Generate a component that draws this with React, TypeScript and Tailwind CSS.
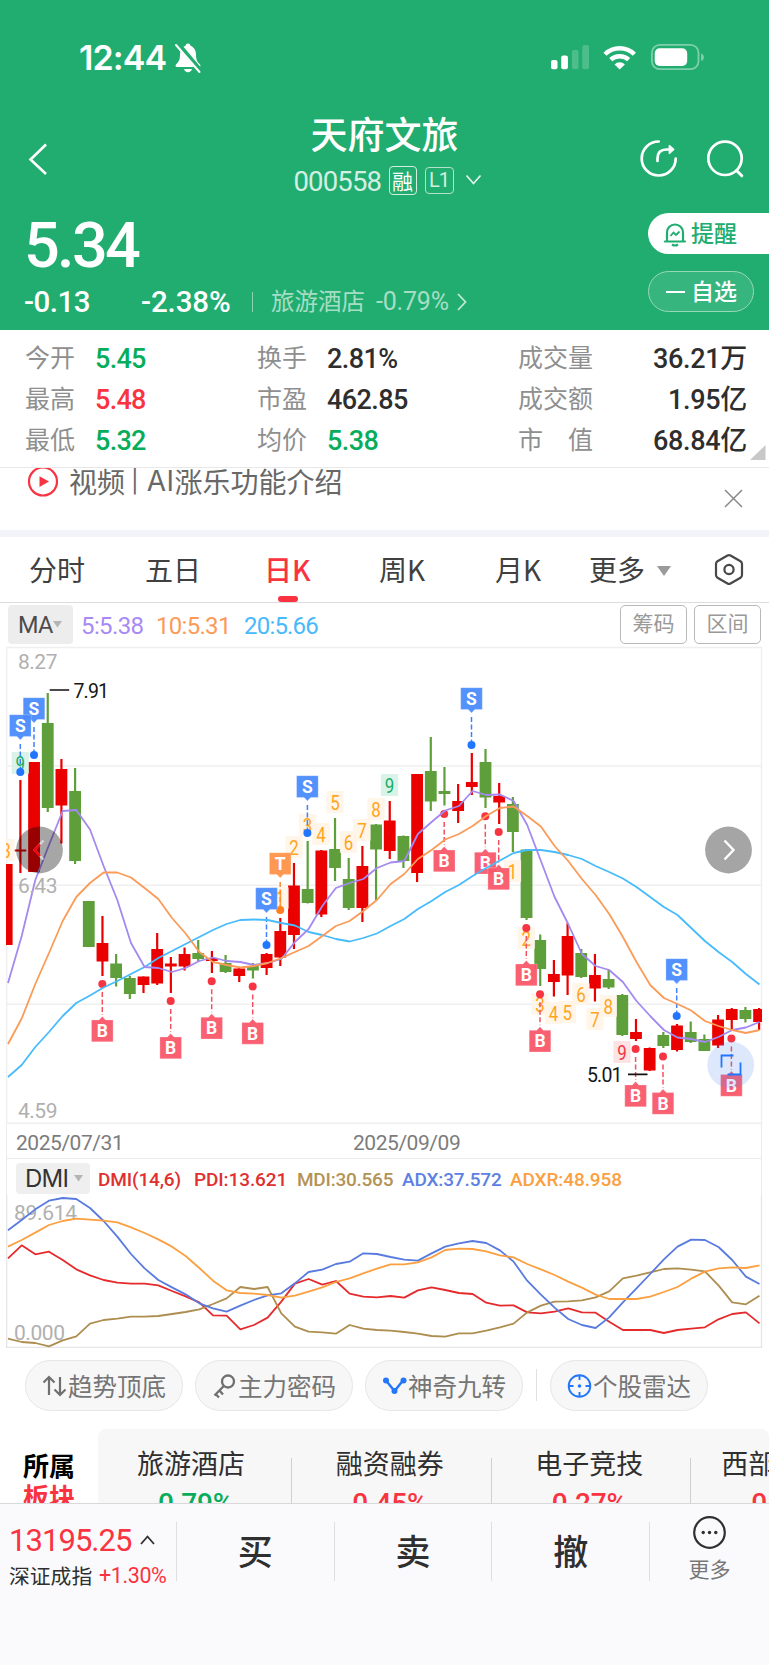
import React from "react";

type Candle = [number, number, number, number, "r" | "g"];

// high, body top, body bottom, low, direction
const candles: Candle[] = [
  [864, 864, 945, 945, "r"], [780, 849.5, 851.5, 873, "r"], [762, 762, 872, 872, "r"],
  [693, 723, 808, 812, "g"], [759, 769, 805.5, 843.5, "r"], [768, 791, 861, 864, "g"],
  [901, 901, 947, 947, "g"], [916, 943, 961.5, 976, "r"], [954, 963.5, 978, 986.5, "g"],
  [976, 978, 994, 999, "g"], [976.5, 976.5, 985, 993, "r"], [933, 949, 983.5, 985, "r"],
  [957, 963.5, 966.5, 993, "r"], [947.5, 954, 966.5, 970.5, "r"], [940, 953, 959, 962, "g"],
  [951, 958, 961, 973, "r"], [955, 963, 972, 973, "g"], [968, 968.5, 976, 982, "r"],
  [963, 966, 970.5, 978.5, "g"], [953, 954, 968, 975, "r"], [918, 931, 957.5, 966, "r"],
  [863, 885.5, 935, 949, "r"], [841, 889, 903, 903.5, "g"], [850, 850.5, 914.5, 917, "r"],
  [818, 849, 868, 881, "g"], [858, 879, 908, 910, "g"], [846, 866, 908, 922, "r"],
  [824, 824.5, 849.5, 900, "g"], [801, 820.5, 851, 859, "r"], [835.5, 836, 861, 868, "g"],
  [774, 774, 873, 882, "r"], [737, 771, 801.5, 811, "g"], [767, 791, 794, 805.5, "g"],
  [784, 801, 811, 823, "r"], [753, 782, 787, 795, "r"], [749, 762, 797.5, 808, "g"],
  [783, 796, 802.5, 824, "r"], [797, 804, 832, 852, "g"], [849, 849.5, 918, 920, "g"],
  [934.5, 940, 969, 986, "g"], [960, 974, 982, 996.5, "r"], [923, 936, 975.5, 995, "r"],
  [949, 953, 977, 978, "g"], [954, 975, 988.5, 1001.5, "r"], [970, 979, 987.5, 989, "g"],
  [994, 995, 1035, 1036, "g"], [1019, 1032, 1039, 1041, "r"], [1047.5, 1048, 1070.5, 1071, "r"],
  [1032, 1035, 1046, 1048, "g"], [1024, 1025.5, 1050, 1051.5, "r"], [1021.5, 1032, 1042, 1043, "g"],
  [1034.5, 1039, 1051, 1051, "g"], [1015, 1019.5, 1045.5, 1048, "r"], [1008, 1009, 1020, 1030, "r"],
  [1007, 1010, 1019, 1022.5, "g"], [1008, 1009, 1022, 1030, "r"],
];

const ma5 = [983, 936, 880, 845, 811, 810, 829.5, 866, 900, 943, 967, 968, 972, 968, 961, 957.5, 961, 962, 965, 963, 959, 942, 929, 906, 888, 883, 879, 868, 862.5, 861, 834, 822, 810.5, 806, 791, 795, 794.5, 801, 825, 861, 897, 924, 954, 966, 970, 982, 1001, 1016, 1030, 1037.5, 1039, 1042, 1037, 1030, 1027.5, 1022];
const ma10 = [1044, 1018.5, 984, 953, 921, 897, 883, 872.5, 872.5, 877.5, 888, 899, 918, 933.5, 952, 962, 965, 967.5, 966, 963, 958, 952, 946, 936, 926, 921, 911, 900, 884, 874, 859, 850, 839.5, 834, 826, 816, 808, 806.5, 816, 826.5, 846, 861, 879, 895, 914, 937, 962, 985, 998, 1004, 1010.5, 1021, 1026, 1030, 1033, 1030];
const ma20 = [1077, 1065, 1047, 1032, 1016, 1003, 995.5, 987.5, 981, 974, 967, 958, 951, 944, 937, 930, 924, 920, 919.5, 920, 923, 925.5, 932, 935, 939, 941.5, 938, 933.5, 926, 919, 909, 901, 892, 885, 876, 868, 860.5, 853, 850, 850, 852, 855, 859, 866, 872, 878.5, 887, 897, 907, 915, 928, 941, 952, 962, 974, 984.5];

const adx = [241, 210, 178, 152, 144, 147, 174, 213, 260, 312, 355, 390, 412, 433, 460, 475, 485, 467, 450, 436, 430, 400, 366, 359, 342, 335, 310, 312, 321, 329, 332, 310, 290, 280, 273, 279, 301, 335, 392, 434, 473, 507, 525, 534, 502, 457, 415, 372, 328, 290, 269, 270, 291, 330, 380, 402];
const adxr = [290, 270, 248, 225, 213, 206, 209, 212, 217, 232, 249, 268, 290, 318, 354, 392, 421, 429, 431, 435, 443, 437, 425, 412, 396, 385, 370, 356, 343, 343, 337, 322, 300, 296, 297, 304, 316, 322, 342, 358, 375, 395, 413, 434, 447, 447, 447, 440, 426, 411, 386, 365, 355, 352, 354, 346];
const pdi = [325, 286, 313, 305, 330, 358, 376, 390, 398, 401, 401, 406, 423, 439, 457, 496, 497, 538, 525, 503, 455, 401, 387, 404, 393, 431, 440, 442, 438, 443, 421, 412, 420, 429, 432, 458, 467, 466, 487, 490, 485, 475, 487, 488, 515, 540, 540, 540, 549, 540, 536, 532, 508, 492, 487, 520];
const mdi = [566, 576, 579, 589, 571, 559, 521, 510, 506, 500, 500, 498, 492, 486, 478, 462, 445, 411, 417, 411, 490, 530, 545, 547, 551, 525, 536, 540, 542, 546, 551, 558, 560, 550, 550, 542, 532, 521, 487, 467, 455, 454, 451, 442, 424, 385, 377, 367, 357, 355, 359, 364, 406, 457, 463, 437];

const line = (ys: number[]) => ys.map((y, i) => `${(8 + 13.664 * i).toFixed(1)},${y}`).join(" ");
const dmiLine = (vs: number[]) => line(vs.map((v) => 1150 + v / 3));

const NUM = "Roboto, sans-serif";

// label, centre x, centre y, tone
const counts: [string, number, number, "o" | "g" | "p"][] = [
  ["3", 6, 850, "o"], ["9", 20.3, 763, "g"], ["1", 280, 898, "o"], ["2", 294, 847, "o"], ["3", 307.5, 825, "o"],
  ["4", 321, 834, "o"], ["5", 335, 802, "o"], ["6", 348.5, 842, "o"], ["7", 362, 830, "o"],
  ["8", 376, 809, "o"], ["9", 389.5, 785, "g"], ["1", 512.5, 871, "o"], ["2", 526.3, 938, "o"],
  ["3", 540, 1004, "o"], ["4", 553.5, 1013, "o"], ["5", 567.3, 1012, "o"], ["6", 581, 994, "o"],
  ["7", 595, 1019, "o"], ["8", 608.3, 1006, "o"], ["9", 622, 1052, "p"],
];
const countTone = {
  o: ["#fff4e6", "#ffa41c"],
  g: ["#d6f2e5", "#14ae67"],
  p: ["#fde0e0", "#f5333f"],
};

const sells: [string, number, number][] = [
  ["S", 34, 755], ["S", 20.3, 772], ["S", 307.4, 833], ["T", 280.2, 910], ["S", 266.5, 945], ["S", 471.5, 745], ["S", 676.7, 1016],
];
const buys: [number, number][] = [
  [102.3, 984], [170.7, 1001], [211.7, 981.3], [252.7, 986.5], [444.2, 814], [485.3, 816.3], [498.7, 832],
  [526.3, 928], [540, 994.3], [635.6, 1049], [663, 1056.6], [731.4, 1038.6],
];

function CandleChart() {
  return (
    <svg width="769" height="478" viewBox="0 646 769 478" className="block shrink-0">
      <defs>
        <clipPath id="plot"><rect x="6" y="646" width="756" height="478" /></clipPath>
      </defs>
      {[647.5, 766, 885.3, 1004.3, 1123.3].map((y) => (
        <line key={y} x1="6" x2="762" y1={y} y2={y} stroke="#efefef" strokeWidth="1.4" />
      ))}
      <path d="M6.7 647V1124M761.5 647V1124" stroke="#efefef" strokeWidth="1.4" />
      <g clipPath="url(#plot)">
        {candles.map(([h, t, b, l, c], i) => {
          const x = 6.7 + 13.68 * i;
          const fill = c === "r" ? "#eb0000" : "#5f9f3b";
          return (
            <g key={i} fill={fill}>
              <rect x={x - 1.1} y={h} width="2.2" height={l - h} />
              <rect x={x - 5.9} y={t} width="11.8" height={b - t} />
            </g>
          );
        })}
        {counts.map(([n, x, y, tone], i) => (
          <g key={i}>
            <rect x={x - 8.6} y={y - 11} width="17.2" height="22" rx="1" fill={countTone[tone][0]} opacity="0.9" />
            <text x={x} y={y + 7.5} textAnchor="middle" fontFamily={NUM} fontSize="20.5" textLength="9.5" lengthAdjust="spacingAndGlyphs" fill={countTone[tone][1]}>{n}</text>
          </g>
        ))}
        {buys.map(([x, y], i) => (
          <g key={i}>
            <line x1={x} x2={x} y1={y + 8} y2={y + 31} stroke="#f4505d" strokeWidth="1.5" strokeDasharray="5 2.5" />
            <circle cx={x} cy={y} r="4" fill="#f73442" />
            <path d={`M${x - 10.8} ${y + 36}h7.5l3.3-3.5 3.3 3.5h7.5v21.7h-21.6z`} fill="#f9596a" fillOpacity="0.95" stroke="#fff" strokeOpacity="0.4" strokeWidth="0.6" />
            <text x={x} y={y + 53} textAnchor="middle" fontFamily={NUM} fontSize="17.5" fontWeight="700" fill="#fff">B</text>
          </g>
        ))}
        {sells.map(([t, x, y], i) => {
          const o = t === "T";
          return (
            <g key={i}>
              <line x1={x} x2={x} y1={y - 28} y2={y - 4} stroke={o ? "#ff8a2b" : "#3d82fa"} strokeWidth="1.5" strokeDasharray="5 2.5" />
              <circle cx={x} cy={y} r="4" fill={o ? "#ff7e1f" : "#2176ff"} />
              <path d={`M${x - 10.8} ${y - 57.3}h21.6v21.7h-7.5l-3.3 3.5-3.3-3.5h-7.5z`} fill={o ? "#ff9248" : "#4a8bfd"} fillOpacity="0.95" stroke="#fff" strokeOpacity="0.4" strokeWidth="0.6" />
              <text x={x} y={y - 40} textAnchor="middle" fontFamily={NUM} fontSize="17.5" fontWeight="700" fill="#fff">{t}</text>
            </g>
          );
        })}
      </g>
      <g fill="none" strokeWidth="1.8" strokeLinejoin="round">
        <polyline points={line(ma20)} stroke="#48bbfc" />
        <polyline points={line(ma5)} stroke="#a389f0" />
        <polyline points={line(ma10)} stroke="#fb9b58" />
      </g>
      <g fontFamily={NUM} fontSize="21" fill="#b0b0b0">
        <text x="18" y="669" textLength="39.5">8.27</text>
        <text x="18" y="893" textLength="39.5">6.43</text>
        <text x="18" y="1118" textLength="39.5">4.59</text>
      </g>
      <g fontFamily={NUM} fontSize="19.5" fill="#151515">
        <text x="73.5" y="697.5" textLength="35.5">7.91</text>
        <text x="587" y="1082" textLength="35.5">5.01</text>
      </g>
      <path d="M49.7 690h19.5M628 1074.4h19.5" stroke="#111" strokeWidth="1.7" />
      <circle cx="39.5" cy="850" r="23.4" fill="#000" fillOpacity="0.35" />
      <path d="M43.5 840.5L34.5 850l9 9.5" fill="none" stroke="#fff" strokeOpacity="0.55" strokeWidth="2.4" />
      <path d="M40 844.5L34.5 850l5.5 6" fill="none" stroke="#f00010" strokeWidth="2.4" />
      <circle cx="728.5" cy="850" r="23.4" fill="#a5a5a5" />
      <path d="M724.5 840.5l9 9.5-9 9.5" fill="none" stroke="#fff" strokeWidth="2.4" />
      <circle cx="730.7" cy="1065" r="23.4" fill="#4a86f0" fillOpacity="0.19" />
      <path d="M721.5 1067.5v-12h12M740.5 1062.5v12h-13" fill="none" stroke="#2176ff" strokeWidth="1.8" />
    </svg>
  );
}

function DmiChart() {
  return (
    <svg width="769" height="153" viewBox="0 1195 769 153" className="block shrink-0">
      <path d="M6.7 1195V1347.3H761.5V1195" fill="none" stroke="#e6e6e6" strokeWidth="1.3" />
      <g fontFamily={NUM} fontSize="21" fill="#b0b0b0">
        <text x="14" y="1219.5" textLength="63">89.614</text>
        <text x="14" y="1340" textLength="51">0.000</text>
      </g>
      <g fill="none" strokeWidth="1.8" strokeLinejoin="round">
        <polyline points={dmiLine(pdi)} stroke="#e52a2c" />
        <polyline points={dmiLine(mdi)} stroke="#ad8d50" />
        <polyline points={dmiLine(adx)} stroke="#597bdf" />
        <polyline points={dmiLine(adxr)} stroke="#fba041" />
      </g>
    </svg>
  );
}

function StatusBar() {
  return (
    <div className="flex h-[115px] pt-[37px] pl-[79px]">
      <div className="h-10 w-[93px] pt-px text-[34px] leading-10 font-semibold tracking-[-0.900px] whitespace-nowrap [font-family:Inter,sans-serif]">12:44</div>
      <svg className="mt-1 ml-[2px]" width="28" height="34" viewBox="0 0 28 34">
        <path d="M14 2.500c-1.500 0-2.200 1-2.300 1.900C8 6 6 9 6 13.500c0 6-1.600 7.500-4 10-1 1.200-.4 2.500 1 2.500h22c1.400 0 2-1.300 1-2.500-2.400-2.500-4-4-4-10 0-4.500-2-7.500-5.700-9.100-.1-.9-.8-1.900-2.300-1.900zM10 28h8c-.4 2-2 3.200-4 3.200S10.400 30 10 28z" fill="#fff" />
        <path d="M3.500 2.500L27 30.500" stroke="#21ad70" strokeWidth="5" />
        <path d="M2 4L25.500 31" stroke="#fff" strokeWidth="2" strokeLinecap="round" />
      </svg>
      <svg className="mt-1 ml-[349px]" width="158" height="34" viewBox="551 41 158 34">
        <g fill="#fff">
          <rect x="551" y="60" width="6.500" height="9.300" rx="2" />
          <rect x="561.200" y="55.500" width="6.700" height="13.800" rx="2" />
          <rect x="572" y="50" width="6.500" height="19.300" rx="2" opacity="0.2" />
          <rect x="582.300" y="45" width="6.700" height="24.300" rx="2" opacity="0.2" />
        </g>
        <g fill="none" stroke="#fff" strokeWidth="4.400">
          <path d="M605 54.200a21 21 0 0 1 29.400 0" />
          <path d="M610.700 59.700a13.300 13.300 0 0 1 18 0" />
        </g>
        <path d="M619.700 69.500l-5.200-5.100a7.500 7.500 0 0 1 10.400 0z" fill="#fff" />
        <rect x="651.900" y="44.800" width="46.600" height="24.400" rx="8" fill="none" stroke="#fff" strokeOpacity="0.42" strokeWidth="1.800" />
        <rect x="654.700" y="48.200" width="32.500" height="17.800" rx="5" fill="#fff" />
        <path d="M701.200 53.500q2.700 1 2.700 3.700t-2.700 3.700z" fill="#fff" opacity="0.45" />
      </svg>
    </div>
  );
}

function Header() {
  return (
    <header className="flex h-[330px] shrink-0 flex-col bg-[#21ad70] text-white">
      <StatusBar />
      <div className="flex h-[85px] justify-between">
        <svg className="mt-[27px] ml-[27px]" width="245" height="35" viewBox="0 0 245 35">
          <path d="M19 2.500L3.500 17.500 19 32" fill="none" stroke="#fff" strokeWidth="2.600" />
        </svg>
        <div className="-mt-[3px] flex w-[210px] flex-col items-center">
          <div className="h-[42px] text-[37px] leading-[42px] font-medium whitespace-nowrap">天府文旅</div>
          <div className="mt-[10px] flex h-[32px] w-[188px] translate-x-[3px] items-center">
            <span className="w-[95px] pt-[3px] text-[27.500px] leading-8 tracking-[-0.850px] text-[#d3efe2] [font-family:Roboto]">000558</span>
            <span className="flex h-[29px] w-[28px] items-center justify-center rounded-[4px] border border-[#d3efe2] text-[21px] leading-none">融</span>
            <span className="ml-2 flex h-[27px] w-[29px] items-center justify-center rounded-[4px] border border-[#b5e2cf] text-[20px] leading-none tracking-[-1px] text-[#d3efe2] [font-family:Roboto]">L1</span>
            <svg className="ml-[11px] shrink-0" width="17" height="12" viewBox="0 0 17 12"><path d="M1.500 1.500l7 8 7-8" fill="none" stroke="#dff3ea" strokeWidth="1.800" /></svg>
          </div>
        </div>
        <svg className="mt-[23px] mr-[22px]" width="250" height="42" viewBox="497 138 250 42">
          <g fill="none" stroke="#fff" strokeWidth="2.700" strokeLinecap="round" strokeLinejoin="round">
            <path d="M658.700 141.500a17 17 0 1 0 17 17" />
            <path d="M657.500 161v-2.500q0-9 9-9h6" />
            <path d="M669.500 145.800l4 3.600-4 3.800z" fill="#fff" strokeWidth="1.800" />
            <circle cx="725" cy="158.300" r="16.700" />
            <path d="M736.500 170.500l5.300 5.300" strokeWidth="3" />
          </g>
        </svg>
      </div>
      <div className="flex h-[130px] justify-between">
        <div className="flex flex-col pl-[24px]">
          <div className="mt-[15px] h-[62px] text-[63px] leading-[62px] font-medium tracking-[-2.700px] [font-family:Roboto]">5.34</div>
          <div className="mt-[9px] flex h-8 items-center whitespace-nowrap [font-family:Roboto,'Noto_Sans_CJK_SC',sans-serif]">
            <span className="w-[117px] text-[29.500px] leading-8 font-medium tracking-[-0.500px]">-0.13</span>
            <span className="w-[111px] text-[29.500px] leading-8 font-medium tracking-[-0.100px]">-2.38%</span>
            <span className="h-5 w-px bg-[#8ad2b1]" />
            <span className="ml-[18px] w-[105px] text-[23.500px] leading-8 text-[#a6dec5]">旅游酒店</span>
            <span className="w-[80px] text-[25px] leading-8 tracking-[-0.200px] text-[#a6dec5]">-0.79%</span>
            <svg width="12" height="20" viewBox="0 0 12 20"><path d="M2 2l7.500 8L2 18" fill="none" stroke="#c0e8d6" strokeWidth="1.800" /></svg>
          </div>
        </div>
        <div className="flex w-[121px] flex-col pt-[13px]">
          <div className="flex h-[41px] items-center rounded-l-full bg-white pl-[15px] text-[#21ad70]">
            <svg width="24" height="26" viewBox="0 0 24 26" fill="none" stroke="currentColor" strokeWidth="2.200">
              <path d="M2 20.500h20M4 20V11.500a8 8 0 0 1 16 0V20" strokeLinecap="round" />
              <path d="M9 23.500q3 2 6 0" />
              <path d="M7.500 15l3-3.500 2.500 2.500 3.500-3.500" strokeWidth="1.800" />
            </svg>
            <span className="mb-[2px] ml-[4px] text-[23px] leading-none font-medium whitespace-nowrap">提醒</span>
          </div>
          <div className="mt-[17px] flex h-[41px] w-[106px] items-center rounded-full border border-[#97d8b9] bg-white/10 pl-[17px]">
            <span className="h-[2px] w-[19px] bg-white" />
            <span className="mb-[2px] ml-[6px] text-[23px] leading-none font-medium whitespace-nowrap">自选</span>
          </div>
        </div>
      </div>
    </header>
  );
}

const GREEN = "text-[#07ad5b]";
const RED = "text-[#fa3341]";
const DARK = "text-[#2e2e2e]";

const stats: [string, string, string, string, string, string, string, string][] = [
  ["今开", "5.45", GREEN, "换手", "2.81%", DARK, "成交量", "36.21万"],
  ["最高", "5.48", RED, "市盈", "462.85", DARK, "成交额", "1.95亿"],
  ["最低", "5.32", GREEN, "均价", "5.38", GREEN, "市　值", "68.84亿"],
];

function Stats() {
  return (
    <section className="flex h-[138px] shrink-0 flex-col border-b border-[#e8e8e8] pt-[6px]">
      {stats.map((s) => (
        <div key={s[0]} className="flex h-[41px] items-center pl-[25px] leading-[41px] whitespace-nowrap">
          <span className="w-[70px] pb-px text-[25px] text-[#8f8f8f]">{s[0]}</span>
          <span className={`w-[162px] pt-[5px] text-[27px] font-medium tracking-[-0.700px] [font-family:Roboto] ${s[2]}`}>{s[1]}</span>
          <span className="w-[70px] pb-px text-[25px] text-[#8f8f8f]">{s[3]}</span>
          <span className={`w-[191px] pt-[5px] text-[27px] font-medium tracking-[-0.600px] [font-family:Roboto] ${s[5]}`}>{s[4]}</span>
          <span className="w-[80px] pb-px text-[25px] text-[#8f8f8f]">{s[6]}</span>
          <span className="w-[149px] pt-[5px] text-right text-[27px] font-medium tracking-[-0.300px] text-[#2e2e2e] [font-family:Roboto,'Noto_Sans_CJK_SC',sans-serif]">{s[7]}</span>
          {s[0] === "最低" && (
            <svg className="mt-[29px] ml-[3px] shrink-0" width="16" height="16" viewBox="0 0 16 16"><path d="M15.500 0v15H0z" fill="#c8c8c8" /></svg>
          )}
        </div>
      ))}
    </section>
  );
}

function Banner() {
  return (
    <section className="flex h-[62px] shrink-0 justify-between overflow-hidden pr-[26px] pl-[27px]">
      <div className="flex">
        <svg className="-mt-[2px]" width="32" height="32" viewBox="0 0 32 32">
          <circle cx="16" cy="15.500" r="14" fill="none" stroke="#f73442" strokeWidth="2.200" />
          <path d="M12.500 10.300L22 15.500l-9.500 5.500z" fill="#f73442" />
        </svg>
        <div className="-mt-[6px] ml-[10px] flex text-[28px] leading-[38px] whitespace-nowrap text-[#686868]">
          <span>视频</span>
          <span className="ml-[6px] text-[23px] [font-family:Inter]">|</span>
          <span className="ml-[8px] tracking-[0.500px] [font-family:Inter]">AI</span>
          <span>涨乐功能介绍</span>
        </div>
      </div>
      <svg className="mt-[21px]" width="19" height="19" viewBox="0 0 19 19"><path d="M1 1l17 17M18 1L1 18" stroke="#888" strokeWidth="1.500" /></svg>
    </section>
  );
}

function Tabs() {
  return (
    <nav className="flex h-[66px] shrink-0 border-b border-[#dcdcdc] pl-[29px] text-[28px] leading-[64px] whitespace-nowrap text-[#404040]">
      <span className="w-[116px]">分时</span>
      <span className="w-[119px]">五日</span>
      <div className="flex w-[115px] flex-col text-[#fa3341]">
        <span className="h-[59px] font-medium">日K</span>
        <span className="ml-[14px] h-[6px] w-[20px] rounded-[3px] bg-[#fa3341]" />
      </div>
      <span className="w-[116px]">周K</span>
      <span className="w-[94px]">月K</span>
      <span className="w-[68px]">更多</span>
      <svg className="mt-[29px]" width="14" height="10" viewBox="0 0 14 10"><path d="M0 0h14L7 10z" fill="#9a9a9a" /></svg>
      <svg className="mt-[16px] ml-[43px]" width="30" height="33" viewBox="0 0 30 33" fill="none" stroke="#484848" strokeWidth="2.200">
        <path d="M13.500 2.500q1.500-.9 3 0l10 5.800q1.500.9 1.500 2.600v11.200q0 1.700-1.500 2.600l-10 5.800q-1.500.9-3 0l-10-5.800Q2 23.800 2 22.100V10.900q0-1.700 1.500-2.600z" />
        <circle cx="15" cy="16.500" r="4.600" />
      </svg>
    </nav>
  );
}

function MaRow() {
  return (
    <div className="flex h-[43px] shrink-0 items-start pt-[2px] pl-2 whitespace-nowrap [font-family:Roboto,'Noto_Sans_CJK_SC',sans-serif]">
      <div className="flex h-[39px] w-[65px] items-center rounded-[4px] bg-[#ededed] pl-[10px]">
        <span className="w-[35px] pt-[2px] text-[23.500px] tracking-[-0.700px] text-[#4c4c4c]">MA</span>
        <svg width="9" height="7" viewBox="0 0 9 7"><path d="M0 0h9L4.500 6.500z" fill="#b4b4b4" /></svg>
      </div>
      <span className="ml-[8px] w-[75px] text-[24px] leading-[42px] tracking-[-0.600px] text-[#a78af5]">5:5.38</span>
      <span className="w-[88px] text-[24px] leading-[42px] tracking-[-0.700px] text-[#fb9b58]">10:5.31</span>
      <span className="w-[376px] text-[24px] leading-[42px] tracking-[-0.800px] text-[#48b9fb]">20:5.66</span>
      <span className="flex h-[39px] w-[67px] items-center justify-center rounded-[5px] border-[1.500px] border-[#b9b9b9] pt-px text-[21px] text-[#999]">筹码</span>
      <span className="ml-[7px] flex h-[39px] w-[67px] items-center justify-center rounded-[5px] border-[1.500px] border-[#b9b9b9] pt-px text-[21px] text-[#999]">区间</span>
    </div>
  );
}

function DmiHeader() {
  return (
    <div className="mr-[7px] ml-[6px] flex h-[37px] shrink-0 items-start border-x border-t border-[#ebebeb] pt-1 pl-[9px] text-[19px] leading-[33px] font-medium whitespace-nowrap [font-family:Roboto]">
      <div className="flex h-[31px] w-[74px] items-center rounded-[4px] bg-[#efefef] pl-[9px]">
        <span className="w-[49px] pb-px text-[24px] leading-[29px] font-normal tracking-[-0.800px] text-[#333] [font-family:Inter]">DMI</span>
        <svg width="9" height="7" viewBox="0 0 9 7"><path d="M0 0h9L4.500 6.500z" fill="#b4b4b4" /></svg>
      </div>
      <span className="ml-[8px] w-[96px] tracking-[-0.150px] text-[#e0302f]">DMI(14,6)</span>
      <span className="w-[103px] tracking-[-0.100px] text-[#e0302f]">PDI:13.621</span>
      <span className="w-[105px] tracking-[-0.250px] text-[#b39355]">MDI:30.565</span>
      <span className="w-[108px] tracking-[-0.150px] text-[#5d80e3]">ADX:37.572</span>
      <span className="tracking-[-0.100px] text-[#fba041]">ADXR:48.958</span>
    </div>
  );
}

function Pill({ icon, label }: { icon: React.ReactNode; label: string }) {
  return (
    <div className="flex h-[51px] w-[158px] items-center rounded-full border border-[#e6e6e6] bg-[#f7f7f7] pl-[16px] text-[24.500px] leading-none whitespace-nowrap text-[#757575]">
      {icon}
      <span className="pt-px">{label}</span>
    </div>
  );
}

function Tools() {
  return (
    <div className="flex h-[81px] shrink-0 items-start pt-[12px] pl-[25px]">
      <Pill label="趋势顶底" icon={
        <svg width="26" height="26" viewBox="0 0 26 26" fill="none" stroke="#707070" strokeWidth="2.200"><path d="M7 22V5M1.500 9.500L7 4l5.500 5.500M18 4v17M12.500 16.500L18 22l5.500-5.500" /></svg>
      } />
      <span className="w-3" />
      <Pill label="主力密码" icon={
        <svg width="26" height="26" viewBox="0 0 26 26" fill="none" stroke="#707070" strokeWidth="2.300"><circle cx="16" cy="8.500" r="6" /><path d="M11.800 13L2.500 22.500M7.500 17.500l3.500 4M3.500 21l3.500 3.500" /></svg>
      } />
      <span className="w-3" />
      <Pill label="神奇九转" icon={
        <svg width="26" height="26" viewBox="0 0 26 26"><path d="M4 7.500L12.500 18 21 7.500" fill="none" stroke="#2277fb" strokeWidth="2.400" /><circle cx="4" cy="7.500" r="3" fill="#2277fb" /><circle cx="21.500" cy="7.500" r="3" fill="#2277fb" /><circle cx="12.500" cy="18" r="3" fill="#2277fb" /></svg>
      } />
      <span className="mt-[9px] mr-[13px] ml-[13px] h-[32px] w-px bg-[#e0e0e0]" />
      <Pill label="个股雷达" icon={
        <svg width="26" height="26" viewBox="0 0 26 26" fill="none" stroke="#2277fb" strokeWidth="1.900"><circle cx="12.500" cy="13" r="10.800" /><path d="M12.500 2v5M12.500 19v5M1.500 13h5M18.500 13h5" /><circle cx="12.500" cy="13" r="1.800" fill="#2277fb" stroke="none" /></svg>
      } />
    </div>
  );
}

const sectors: [string, string, string, string][] = [
  ["旅游酒店", "-0.79%", GREEN, "w-[193px] pr-[7px]"],
  ["融资融券", "0.45%", RED, "w-[199.500px] pr-[2px]"],
  ["电子竞技", "0.27%", RED, "w-[199.500px] pr-[2px]"],
  ["西部大开发", "0.32%", RED, "w-[199.500px] pr-[2px]"],
];

function Sectors() {
  return (
    <section className="flex h-[74px] shrink-0 overflow-hidden">
      <div className="w-[98px] shrink-0 pt-[20px] pl-[23px] text-[26px] leading-[31px] font-bold text-black">
        <div>所属</div>
        <div className="text-[#fa3341]">板块</div>
      </div>
      <div className="flex h-[120px] w-[671px] shrink-0 overflow-hidden rounded-[8px] bg-[#f7f7f7]">
        {sectors.map(([name, v, c, box], i) => (
          <div key={name} className="flex shrink-0">
            <div className={`flex flex-col items-center pt-[15px] whitespace-nowrap ${box}`}>
              <span className="h-[37px] text-[27px] leading-[37px] text-[#2f2f2f]">{name}</span>
              <span className={`mt-[6px] text-[28px] leading-[33px] font-medium tracking-[-0.200px] [font-family:Roboto] ${c}`}>{v}</span>
            </div>
            {i < 3 && <span className="mt-[29px] -mr-px h-[60px] w-px shrink-0 bg-[#cfcfcf]" />}
          </div>
        ))}
      </div>
    </section>
  );
}

function BottomBar() {
  return (
    <footer className="flex h-[162px] shrink-0 border-t border-[#d9d9dc] bg-[#fafafc] text-[#2f2f2f]">
      <div className="flex w-[176px] shrink-0 flex-col pl-[9px] whitespace-nowrap">
        <div className="mt-[18px] flex h-[38px] items-center">
          <span className="w-[131px] text-[31px] leading-[38px] tracking-[-0.950px] text-[#fa3341] [font-family:Roboto]">13195.25</span>
          <svg className="mb-[3px]" width="15" height="10" viewBox="0 0 15 10"><path d="M1 9l6.500-7.500L14 9" fill="none" stroke="#2f2f2f" strokeWidth="1.800" /></svg>
        </div>
        <div className="flex h-[30px] items-center">
          <span className="w-[90px] text-[20.800px] leading-[30px]">深证成指</span>
          <span className="pt-[2px] text-[21.500px] leading-[30px] tracking-[-0.400px] text-[#fa3341] [font-family:Roboto]">+1.30%</span>
        </div>
      </div>
      {["买", "卖", "撤"].map((t) => (
        <div key={t} className="mt-[18px] flex h-[59px] w-[157.700px] items-center justify-center border-l border-[#dfdfe2] pb-[4px] text-[35px] leading-none font-medium">{t}</div>
      ))}
      <div className="mt-[18px] flex h-[59px] flex-1 justify-center border-l border-[#dfdfe2]">
        <div className="-mt-[7px] flex flex-col items-center">
          <svg className="shrink-0" width="35" height="35" viewBox="0 0 35 35">
            <circle cx="17.500" cy="17.500" r="15.300" fill="none" stroke="#2f2f2f" strokeWidth="2.200" />
            <g fill="#2f2f2f"><circle cx="11.200" cy="17.500" r="1.700" /><circle cx="17.500" cy="17.500" r="1.700" /><circle cx="23.800" cy="17.500" r="1.700" /></g>
          </svg>
          <span className="mt-[4px] text-[21px] leading-[28px] text-[#777]">更多</span>
        </div>
      </div>
    </footer>
  );
}

export default function App() {
  return (
    <div className="flex h-[1665px] w-[769px] flex-col overflow-hidden bg-white [font-family:'Noto_Sans_CJK_SC',sans-serif]">
      <Header />
      <Stats />
      <Banner />
      <div className="h-[7px] shrink-0 bg-[#f3f4f9]" />
      <Tabs />
      <MaRow />
      <CandleChart />
      <div className="mr-[7px] ml-[6px] flex h-[34px] shrink-0 items-center border-x border-[#ebebeb] pt-[4px] pl-[9px] text-[21px] leading-[30px] tracking-[-0.450px] text-[#7c7c7c] [font-family:Roboto]">
        <span className="w-[337px]">2025/07/31</span>
        <span>2025/09/09</span>
      </div>
      <DmiHeader />
      <DmiChart />
      <Tools />
      <Sectors />
      <BottomBar />
    </div>
  );
}
